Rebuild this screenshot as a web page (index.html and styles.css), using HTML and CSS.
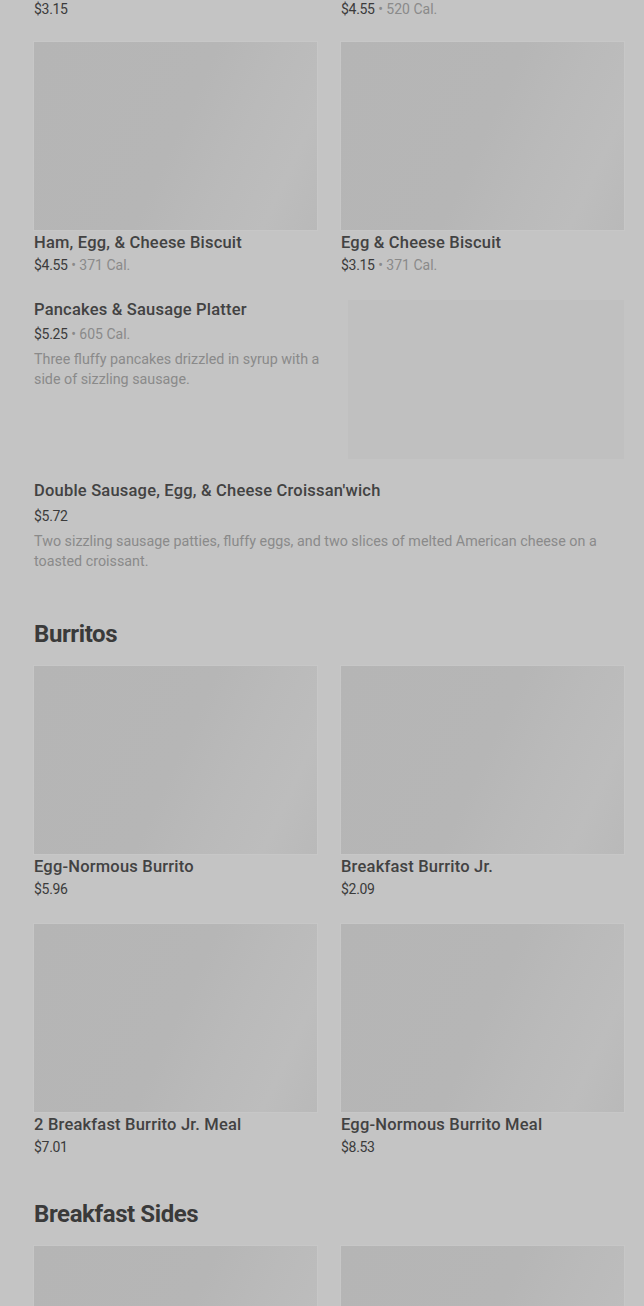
FILE: index.html
```html
<!DOCTYPE html>
<html lang="en">
<head>
<meta charset="utf-8">
<title>Menu</title>
<link rel="stylesheet" href="styles.css">
</head>
<body>
<main class="menu">
  <div class="grid grid-top">
    <div class="item"><div class="meta"><span class="price">$3.15</span></div></div>
    <div class="item"><div class="meta"><span class="price">$4.55</span><span class="sep"> • </span><span class="cal">520 Cal.</span></div></div>
  </div>

  <div class="grid">
    <div class="item">
      <div class="thumb"></div>
      <div class="name">Ham, Egg, &amp; Cheese Biscuit</div>
      <div class="meta"><span class="price">$4.55</span><span class="sep"> • </span><span class="cal">371 Cal.</span></div>
    </div>
    <div class="item">
      <div class="thumb"></div>
      <div class="name">Egg &amp; Cheese Biscuit</div>
      <div class="meta"><span class="price">$3.15</span><span class="sep"> • </span><span class="cal">371 Cal.</span></div>
    </div>
  </div>

  <div class="wide">
    <div class="wide-text">
      <div class="name">Pancakes &amp; Sausage Platter</div>
      <div class="meta"><span class="price">$5.25</span><span class="sep"> • </span><span class="cal">605 Cal.</span></div>
      <p class="desc">Three fluffy pancakes drizzled in syrup with a side of sizzling sausage.</p>
    </div>
    <div class="wide-thumb"></div>
  </div>

  <div class="wide wide-noimg">
    <div class="wide-text">
      <div class="name">Double Sausage, Egg, &amp; Cheese Croissan'wich</div>
      <div class="meta"><span class="price">$5.72</span></div>
      <p class="desc">Two sizzling sausage patties, fluffy eggs, and two slices of melted American cheese on a toasted croissant.</p>
    </div>
  </div>

  <h2 class="section-title">Burritos</h2>
  <div class="grid">
    <div class="item">
      <div class="thumb"></div>
      <div class="name">Egg-Normous Burrito</div>
      <div class="meta"><span class="price">$5.96</span></div>
    </div>
    <div class="item">
      <div class="thumb"></div>
      <div class="name">Breakfast Burrito Jr.</div>
      <div class="meta"><span class="price">$2.09</span></div>
    </div>
    <div class="item">
      <div class="thumb"></div>
      <div class="name">2 Breakfast Burrito Jr. Meal</div>
      <div class="meta"><span class="price">$7.01</span></div>
    </div>
    <div class="item">
      <div class="thumb"></div>
      <div class="name">Egg-Normous Burrito Meal</div>
      <div class="meta"><span class="price">$8.53</span></div>
    </div>
  </div>

  <h2 class="section-title">Breakfast Sides</h2>
  <div class="grid">
    <div class="item"><div class="thumb"></div></div>
    <div class="item"><div class="thumb"></div></div>
  </div>
</main>
</body>
</html>
```
FILE: styles.css
```css
* { box-sizing: border-box; }
html, body {
  margin: 0;
  padding: 0;
  background: #c4c4c4;
  overflow: hidden;
}
body {
  font-family: Roboto, "Liberation Sans", Arial, sans-serif;
  color: #3d3d3d;
  height: 1306px;
}
.menu {
  padding: 0 20px 0 34px;
  margin-top: -2px;
}
.grid {
  display: grid;
  grid-template-columns: 283px 283px;
  column-gap: 24px;
  row-gap: 24px;
  margin-bottom: 24px;
}
.grid-top { margin-bottom: 22px; }
.thumb {
  height: 188px;
  background: linear-gradient(115deg, #b5b5b5 0%, #b6b6b6 50%, #bababa 68%, #bdbdbd 85%, #b9b9b9 100%);
  box-shadow: 0 0 0 1px rgba(255,255,255,0.05);
}
.name {
  margin-top: 2px;
  font-size: 16.5px;
  font-weight: 500;
  line-height: 22px;
  letter-spacing: 0.2px;
  color: #424242;
  white-space: nowrap;
}
.meta {
  font-size: 14px;
  line-height: 22px;
  color: #3a3a3a;
}
.price { color: #3b3b3b; letter-spacing: -0.3px; }
.sep, .cal { color: #8a8a8a; }
.desc {
  margin: 5px 0 0;
  font-size: 14.3px;
  line-height: 20px;
  color: #8a8a8a;
}
.wide {
  display: flex;
  gap: 14px;
  margin-bottom: 22px;
}
.wide-text {
  width: 300px;
  flex: none;
}
.wide-text .name { margin-top: -1px; }
.wide-text .meta { margin-top: 3px; line-height: 20px; }
.wide-thumb {
  width: 276px;
  height: 159px;
  background: #c0c0c0;
}
.wide-noimg .wide-text { width: 590px; }
.wide-noimg .wide-text .meta { margin-top: 4px; }
.wide-noimg { margin-bottom: 0; }
.section-title {
  margin: 47px 0 16px;
  font-size: 24px;
  line-height: 32px;
  font-weight: 700;
  color: #3a3a3a;
  letter-spacing: -0.4px;
}
.grid + .section-title { margin-top: 40px; }
```
